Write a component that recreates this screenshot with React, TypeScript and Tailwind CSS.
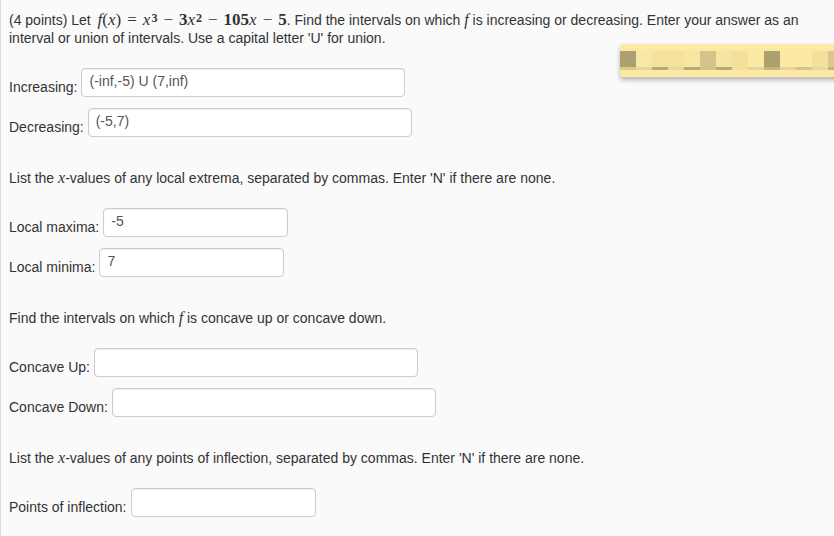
import React from "react";

const sans = "font-['Liberation_Sans',Arial,sans-serif]";
const serif = "font-['Liberation_Serif','Times_New_Roman',serif]";

function V({ c, size = "text-[16px]" }: { c: string; size?: string }) {
  return <i className={`${serif} ${size}`}>{c}</i>;
}

function Op({ c }: { c: string }) {
  return <span className={`${serif} text-[17px] mx-[6px]`}>{c}</span>;
}

function Sup({ c }: { c: string }) {
  return <sup className={`${serif} text-[12px] font-bold relative -top-[3px] ml-[1px]`}>{c}</sup>;
}

function Row({ label, value, width }: { label: string; value?: string; width: string }) {
  return (
    <div className="flex items-end h-[29px]">
      <span className="leading-[18px] mb-[1px] text-[#333]">{label}</span>
      <input
        readOnly
        value={value ?? ""}
        className={`${width} h-[29px] ml-[4px] px-[7px] pb-[3px] bg-white border border-[#ccc] rounded-[4px] shadow-[inset_0_1px_1px_rgba(0,0,0,0.07)] text-[14px] text-[#555] outline-none`}
      />
    </div>
  );
}

const topCells = ["#ada070", "#f8e8a6", "#f3e19d", "#f4e19c", "#f7e6a3", "#d4c48c", "#f6e4a2", "#f3e09c", "#fbeaa6", "#ada070", "#fbe9a5", "#fbe9a5", "#f3e09c", "#d9c98e"];
const stripCells = ["#d9c98e", "#e8d898", "#b9a977", "#ead898", "#b9a977", "#d4c48c", "#b9a977", "#f3e09c", "#e6d494", "#c4b47e", "#e6d494", "#d4c48c", "#ead898", "#c4b47e"];

function Redacted() {
  return (
    <div className="absolute left-[619px] top-[44px] w-[230px] h-[33px] rounded-[3px] bg-[#fde9a3] shadow-[0_3px_5px_rgba(0,0,0,0.28)] pt-[7px]">
      <div className="flex">
        {topCells.map((c, i) => (
          <div key={i} className="w-[16px] h-[16px]" style={{ background: c }} />
        ))}
      </div>
      <div className="flex">
        {stripCells.map((c, i) => (
          <div key={i} className="w-[16px] h-[3px]" style={{ background: c }} />
        ))}
      </div>
    </div>
  );
}

export default function App() {
  return (
    <div className={`relative w-[834px] h-[536px] overflow-hidden bg-[#fafafa] border-l border-[#dedede] ${sans} text-[14px] text-[#333]`}>
      <div className="pl-[8px] pt-[11px]">
        <p className="leading-[18px]">
          (4 points) Let <span className="ml-[3px]" />
          <V c="f" size="text-[17px]" />
          <span className={`${serif} text-[17px]`}>(</span>
          <V c="x" size="text-[17px]" />
          <span className={`${serif} text-[17px]`}>)</span>
          <Op c="=" />
          <V c="x" size="text-[17px]" />
          <Sup c="3" />
          <Op c="−" />
          <span className={`${serif} text-[17px] font-bold`}>3</span>
          <V c="x" size="text-[17px]" />
          <Sup c="2" />
          <Op c="−" />
          <span className={`${serif} text-[17px] font-bold`}>105</span>
          <V c="x" size="text-[17px]" />
          <Op c="−" />
          <span className={`${serif} text-[17px] font-bold`}>5</span>. Find the intervals on which <V c="f" /> is increasing or
          decreasing. Enter your answer as an interval or union of intervals. Use a capital letter 'U' for union.
        </p>

        <div className="mt-[21px] flex flex-col gap-[11px]">
          <Row label="Increasing:" value="(-inf,-5) U (7,inf)" width="w-[324px]" />
          <Row label="Decreasing:" value="(-5,7)" width="w-[324px]" />
        </div>

        <p className="mt-[32px] leading-[18px]">
          List the <V c="x" />-values of any local extrema, separated by commas. Enter 'N' if there are none.
        </p>

        <div className="mt-[21px] flex flex-col gap-[11px]">
          <Row label="Local maxima:" value="-5" width="w-[185px]" />
          <Row label="Local minima:" value="7" width="w-[185px]" />
        </div>

        <p className="mt-[32px] leading-[18px]">
          Find the intervals on which <V c="f" /> is concave up or concave down.
        </p>

        <div className="mt-[21px] flex flex-col gap-[11px]">
          <Row label="Concave Up:" width="w-[324px]" />
          <Row label="Concave Down:" width="w-[324px]" />
        </div>

        <p className="mt-[32px] leading-[18px]">
          List the <V c="x" />-values of any points of inflection, separated by commas. Enter 'N' if there are none.
        </p>

        <div className="mt-[21px] flex flex-col gap-[11px]">
          <Row label="Points of inflection:" width="w-[185px]" />
        </div>
      </div>
      <Redacted />
    </div>
  );
}
